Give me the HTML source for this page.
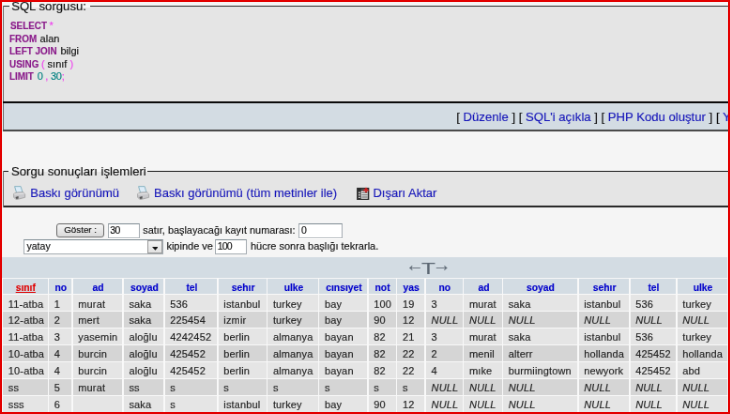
<!DOCTYPE html>
<html><head><meta charset="utf-8">
<style>
html,body{margin:0;padding:0;overflow:hidden;}
body{width:730px;height:414px;overflow:hidden;background:#f5f5f5;position:relative;font-family:"Liberation Sans",sans-serif;color:#000;}
#frame{position:absolute;left:0;top:0;width:726px;height:410px;border:2px solid #e30000;z-index:10;}
#w{position:absolute;left:0;top:0;width:800px;height:460px;transform:scale(0.9385);transform-origin:0 0;will-change:transform;}
#w div,#w span{white-space:nowrap;-webkit-text-stroke:0.15px;}
.a{position:absolute;}
.bg{position:absolute;}
.t13{position:absolute;font-size:13.14px;line-height:15px;color:#111;}
.t11{position:absolute;font-size:11px;line-height:13px;color:#111;}
a{color:#1818ba;text-decoration:none;}
.k{color:#8a1a8a;font-weight:bold;display:inline-block;transform:scaleX(0.90);transform-origin:0 50%;}
.p{color:#f040f0;}
.n{color:#008080;}
.inp{position:absolute;background:#fff;border:1px solid #a5acb2;border-top-color:#7f8c94;box-sizing:border-box;font-size:10.5px;line-height:13.5px;padding-left:2.5px;color:#111;}
.c{position:absolute;}
.ro .c{background:#e5e5e5;}
.re .c{background:#d5d5d5;}
.h .c{background:#d3dce3;}
.ct{position:absolute;font-size:11px;line-height:13px;color:#222;letter-spacing:0.14px;}
.th{position:absolute;font-size:11px;line-height:13px;color:#0000cc;font-weight:bold;text-align:center;}
.th span{display:inline-block;transform:scaleX(0.94);}
</style></head><body>
<div id="w">

<div class="bg" style="left:2.56px;top:6.39px;width:790px;height:102.72px;background:#e5e5e5;"></div>
<div class="bg" style="left:2.56px;top:6.34px;width:790px;height:1.07px;background:#303030;"></div>
<div class="bg" style="left:2.56px;top:6.39px;width:1.49px;height:133.19px;background:#6a6a6a;"></div>
<div class="bg" style="left:10.23px;top:5.54px;width:85.35px;height:2.34px;background:#f5f5f5;"></div>
<div class="t13" style="left:12.15px;top:-0.85px;">SQL sorgusu:</div>
<div class="t11" style="left:10.97px;top:21.36px;"><span class="k">SELECT</span></div>
<div class="t11 p" style="left:52.53px;top:21.36px;">*</div>
<div class="t11" style="left:10.02px;top:35.11px;"><span class="k">FROM</span></div>
<div class="t11" style="left:42.62px;top:35.11px;">alan</div>
<div class="t11" style="left:10.02px;top:48.43px;"><span class="k">LEFT JOIN</span></div>
<div class="t11" style="left:64.46px;top:48.43px;">bilgi</div>
<div class="t11" style="left:10.02px;top:61.64px;"><span class="k">USING</span></div>
<div class="t11" style="left:43.90px;top:61.64px;"><span class="p">(</span> sınıf <span class="p">)</span></div>
<div class="t11" style="left:10.02px;top:74.75px;"><span class="k">LIMIT</span></div>
<div class="t11" style="left:39.64px;top:74.75px;letter-spacing:-0.25px;"><span class="n">0</span> <span class="p">,</span> <span class="n">30</span><span class="p">;</span></div>
<div class="bg" style="left:4.05px;top:108.68px;width:790px;height:30.26px;background:#d3dce3;"></div>
<div class="bg" style="left:2.56px;top:108.26px;width:790px;height:1.65px;background:#0a0a0a;"></div>
<div class="bg" style="left:2.56px;top:138.41px;width:790px;height:1.17px;background:#4a4a4a;"></div>
<div class="t13" style="left:486.31px;top:116.89px;">[ <a>Düzenle</a> ] [ <a>SQL'i açıkla</a> ] [ <a>PHP Kodu oluştur</a> ] [ <a>Yenile</a> ]</div>
<div class="bg" style="left:2.56px;top:182.21px;width:790px;height:37.83px;background:#e5e5e5;"></div>
<div class="bg" style="left:2.56px;top:181.67px;width:790px;height:1.33px;background:#1a1a1a;"></div>
<div class="bg" style="left:2.56px;top:219.45px;width:790px;height:1.23px;background:#2a2a2a;"></div>
<div class="bg" style="left:2.56px;top:181.67px;width:1.49px;height:39.00px;background:#6a6a6a;"></div>
<div class="bg" style="left:9.38px;top:181.14px;width:147.58px;height:2.34px;background:#f5f5f5;"></div>
<div class="t13" style="left:12.04px;top:175.39px;">Sorgu sonuçları işlemleri</div>
<div class="t13" style="left:32.29px;top:198.19px;font-size:13px;"><a>Baskı görünümü</a></div>
<div class="t13" style="left:164.09px;top:198.19px;font-size:13px;"><a>Baskı görünümü (tüm metinler ile)</a></div>
<div class="t13" style="left:397.44px;top:198.19px;font-size:13px;"><a>Dışarı Aktar</a></div>
<svg class="a" style="left:14.49px;top:197.76px;" width="13.32" height="15.45" viewBox="0 0 12.5 14.5"><path d="M1.5 0.6L7.6 0.6L9.6 7.2L3.6 7.6Z" fill="#dcecf8" stroke="#79aabb" stroke-width="0.8"/><path d="M0.6 8L3.4 6.6L10 6.2L11.8 8.6L11.8 11.6L3 13.8L0.6 11.4Z" fill="#c9c9cc" stroke="#9a9a9a" stroke-width="0.7"/><path d="M2.2 11.2L5.2 10.4L5.4 12.6L3.2 13.2Z" fill="#555"/><path d="M1 8.4L11 7.6" stroke="#eee" stroke-width="0.8"/></svg>
<svg class="a" style="left:146.40px;top:197.76px;" width="13.32" height="15.45" viewBox="0 0 12.5 14.5"><path d="M1.5 0.6L7.6 0.6L9.6 7.2L3.6 7.6Z" fill="#dcecf8" stroke="#79aabb" stroke-width="0.8"/><path d="M0.6 8L3.4 6.6L10 6.2L11.8 8.6L11.8 11.6L3 13.8L0.6 11.4Z" fill="#c9c9cc" stroke="#9a9a9a" stroke-width="0.7"/><path d="M2.2 11.2L5.2 10.4L5.4 12.6L3.2 13.2Z" fill="#555"/><path d="M1 8.4L11 7.6" stroke="#eee" stroke-width="0.8"/></svg>
<svg class="a" style="left:380.18px;top:198.83px;" width="13.85" height="14.28" viewBox="0 0 13 13.4"><rect x="0.8" y="1.6" width="11" height="11" fill="#fff" stroke="#2a2a2a" stroke-width="1.4"/><rect x="0.8" y="1.6" width="3.6" height="11" fill="#333"/><path d="M0.8 3.2H11.8" stroke="#2a2a2a" stroke-width="1.8"/><path d="M5 5.8H11M5 8.2H11M5 10.4H11" stroke="#444" stroke-width="1"/><path d="M1.9 5.2h1.4v1.3h-1.4zM1.9 7.6h1.4v1.3h-1.4zM1.9 10h1.4v1.3h-1.4z" fill="#eee"/><path d="M6.2 4.2L9.4 0.4L12.6 4.2Z" fill="#cc1f1f"/><path d="M8.4 4.2h2v1.5h-2z" fill="#cc1f1f"/></svg>
<div class="a" style="left:59.99px;top:238.47px;width:51.36px;height:14.70px;box-sizing:border-box;border:1px solid #6a6a6a;border-radius:3px;background:linear-gradient(#f6f6f6,#dadada);font-size:9.8px;line-height:12.6px;text-align:center;color:#111;">Göster :</div>
<div class="inp" style="left:114.65px;top:237.93px;width:34.10px;height:16.30px;letter-spacing:-0.6px;padding-left:1.6px;">30</div>
<div class="t11" style="left:152.26px;top:239.16px;font-size:10.9px;">satır, başlayacağı kayıt numarası:</div>
<div class="inp" style="left:317.53px;top:237.93px;width:47.95px;height:16.30px;">0</div>
<div class="inp" style="left:25.04px;top:255.19px;width:149.39px;height:15.88px;line-height:12px;">yatay</div>
<div class="a" style="left:157.27px;top:256.37px;width:16.20px;height:13.53px;box-sizing:border-box;border:1px solid #9a9a9a;background:linear-gradient(#f4f4f4,#e2e2e2);"></div>
<svg class="a" style="left:161.53px;top:262.76px;" width="6.82" height="3.84" viewBox="0 0 7 4"><path d="M0 0H7L3.5 4Z" fill="#111"/></svg>
<div class="t11" style="left:177.41px;top:256.21px;">kipinde ve</div>
<div class="inp" style="left:228.66px;top:255.41px;width:34.63px;height:15.98px;letter-spacing:-0.8px;padding-left:2px;">100</div>
<div class="t11" style="left:266.92px;top:256.42px;">hücre sonra başlığı tekrarla.</div>
<div class="bg" style="left:2.13px;top:273.73px;width:772.94px;height:22.16px;background:#d3dce3;"></div>
<div class="a" style="left:432.18px;top:273.63px;font-size:19.4px;line-height:17px;color:#5b6672;">←</div>
<div class="a" style="left:448.80px;top:275.97px;font-size:17.4px;line-height:20px;color:#5b6672;transform:scaleX(1.4);transform-origin:0 0;">T</div>
<div class="a" style="left:460.95px;top:273.63px;font-size:19.4px;line-height:17px;color:#5b6672;">→</div>
<div class="bg" style="left:2.13px;top:295.68px;width:773.15px;height:200px;background:#f9f9f9;"></div>
<div class="h">
<div class="c" style="left:3.20px;top:296.54px;width:47.52px;height:16.30px;"></div>
<div class="th" style="left:3.73px;top:299.52px;width:47.52px;"><span><a style="color:#e00000;text-decoration:underline;">sınıf</a></span></div>
<div class="c" style="left:52.21px;top:296.54px;width:23.97px;height:16.30px;"></div>
<div class="th" style="left:52.74px;top:299.52px;width:23.97px;"><span>no</span></div>
<div class="c" style="left:77.68px;top:296.54px;width:52.64px;height:16.30px;"></div>
<div class="th" style="left:78.21px;top:299.52px;width:52.64px;"><span>ad</span></div>
<div class="c" style="left:131.81px;top:296.54px;width:42.41px;height:16.30px;"></div>
<div class="th" style="left:132.34px;top:299.52px;width:42.41px;"><span>soyad</span></div>
<div class="c" style="left:175.71px;top:296.54px;width:55.51px;height:16.30px;"></div>
<div class="th" style="left:176.24px;top:299.52px;width:55.51px;"><span>tel</span></div>
<div class="c" style="left:232.71px;top:296.54px;width:51.04px;height:16.30px;"></div>
<div class="th" style="left:233.24px;top:299.52px;width:51.04px;"><span>sehır</span></div>
<div class="c" style="left:285.24px;top:296.54px;width:53.60px;height:16.30px;"></div>
<div class="th" style="left:285.78px;top:299.52px;width:53.60px;"><span>ulke</span></div>
<div class="c" style="left:340.33px;top:296.54px;width:50.83px;height:16.30px;"></div>
<div class="th" style="left:340.86px;top:299.52px;width:50.83px;"><span>cınsıyet</span></div>
<div class="c" style="left:392.65px;top:296.54px;width:29.09px;height:16.30px;"></div>
<div class="th" style="left:393.18px;top:299.52px;width:29.09px;"><span>not</span></div>
<div class="c" style="left:423.23px;top:296.54px;width:29.20px;height:16.30px;"></div>
<div class="th" style="left:423.76px;top:299.52px;width:29.20px;"><span>yas</span></div>
<div class="c" style="left:453.92px;top:296.54px;width:38.89px;height:16.30px;"></div>
<div class="th" style="left:454.45px;top:299.52px;width:38.89px;"><span>no</span></div>
<div class="c" style="left:494.30px;top:296.54px;width:40.28px;height:16.30px;"></div>
<div class="th" style="left:494.83px;top:299.52px;width:40.28px;"><span>ad</span></div>
<div class="c" style="left:536.07px;top:296.54px;width:79.06px;height:16.30px;"></div>
<div class="th" style="left:536.60px;top:299.52px;width:79.06px;"><span>soyad</span></div>
<div class="c" style="left:616.62px;top:296.54px;width:53.38px;height:16.30px;"></div>
<div class="th" style="left:617.16px;top:299.52px;width:53.38px;"><span>sehır</span></div>
<div class="c" style="left:671.50px;top:296.54px;width:48.59px;height:16.30px;"></div>
<div class="th" style="left:672.03px;top:299.52px;width:48.59px;"><span>tel</span></div>
<div class="c" style="left:721.58px;top:296.54px;width:53.28px;height:16.30px;"></div>
<div class="th" style="left:722.11px;top:299.52px;width:53.28px;"><span>ulke</span></div>
</div>
<div class="ro">
<div class="c" style="left:3.20px;top:314.44px;width:47.52px;height:16.30px;"></div>
<div class="ct" style="left:8.84px;top:317.53px;">11-atba</div>
<div class="c" style="left:52.21px;top:314.44px;width:23.97px;height:16.30px;"></div>
<div class="ct" style="left:57.86px;top:317.53px;">1</div>
<div class="c" style="left:77.68px;top:314.44px;width:52.64px;height:16.30px;"></div>
<div class="ct" style="left:83.32px;top:317.53px;">murat</div>
<div class="c" style="left:131.81px;top:314.44px;width:42.41px;height:16.30px;"></div>
<div class="ct" style="left:137.45px;top:317.53px;">saka</div>
<div class="c" style="left:175.71px;top:314.44px;width:55.51px;height:16.30px;"></div>
<div class="ct" style="left:181.35px;top:317.53px;">536</div>
<div class="c" style="left:232.71px;top:314.44px;width:51.04px;height:16.30px;"></div>
<div class="ct" style="left:238.36px;top:317.53px;">istanbul</div>
<div class="c" style="left:285.24px;top:314.44px;width:53.60px;height:16.30px;"></div>
<div class="ct" style="left:290.89px;top:317.53px;">turkey</div>
<div class="c" style="left:340.33px;top:314.44px;width:50.83px;height:16.30px;"></div>
<div class="ct" style="left:345.98px;top:317.53px;">bay</div>
<div class="c" style="left:392.65px;top:314.44px;width:29.09px;height:16.30px;"></div>
<div class="ct" style="left:398.30px;top:317.53px;">100</div>
<div class="c" style="left:423.23px;top:314.44px;width:29.20px;height:16.30px;"></div>
<div class="ct" style="left:428.88px;top:317.53px;">19</div>
<div class="c" style="left:453.92px;top:314.44px;width:38.89px;height:16.30px;"></div>
<div class="ct" style="left:459.56px;top:317.53px;">3</div>
<div class="c" style="left:494.30px;top:314.44px;width:40.28px;height:16.30px;"></div>
<div class="ct" style="left:499.95px;top:317.53px;">murat</div>
<div class="c" style="left:536.07px;top:314.44px;width:79.06px;height:16.30px;"></div>
<div class="ct" style="left:541.72px;top:317.53px;">saka</div>
<div class="c" style="left:616.62px;top:314.44px;width:53.38px;height:16.30px;"></div>
<div class="ct" style="left:622.27px;top:317.53px;">istanbul</div>
<div class="c" style="left:671.50px;top:314.44px;width:48.59px;height:16.30px;"></div>
<div class="ct" style="left:677.14px;top:317.53px;">536</div>
<div class="c" style="left:721.58px;top:314.44px;width:53.28px;height:16.30px;"></div>
<div class="ct" style="left:727.22px;top:317.53px;">turkey</div>
</div>
<div class="re">
<div class="c" style="left:3.20px;top:332.45px;width:47.52px;height:16.30px;"></div>
<div class="ct" style="left:8.84px;top:335.45px;">12-atba</div>
<div class="c" style="left:52.21px;top:332.45px;width:23.97px;height:16.30px;"></div>
<div class="ct" style="left:57.86px;top:335.45px;">2</div>
<div class="c" style="left:77.68px;top:332.45px;width:52.64px;height:16.30px;"></div>
<div class="ct" style="left:83.32px;top:335.45px;">mert</div>
<div class="c" style="left:131.81px;top:332.45px;width:42.41px;height:16.30px;"></div>
<div class="ct" style="left:137.45px;top:335.45px;">saka</div>
<div class="c" style="left:175.71px;top:332.45px;width:55.51px;height:16.30px;"></div>
<div class="ct" style="left:181.35px;top:335.45px;">225454</div>
<div class="c" style="left:232.71px;top:332.45px;width:51.04px;height:16.30px;"></div>
<div class="ct" style="left:238.36px;top:335.45px;">izmir</div>
<div class="c" style="left:285.24px;top:332.45px;width:53.60px;height:16.30px;"></div>
<div class="ct" style="left:290.89px;top:335.45px;">turkey</div>
<div class="c" style="left:340.33px;top:332.45px;width:50.83px;height:16.30px;"></div>
<div class="ct" style="left:345.98px;top:335.45px;">bay</div>
<div class="c" style="left:392.65px;top:332.45px;width:29.09px;height:16.30px;"></div>
<div class="ct" style="left:398.30px;top:335.45px;">90</div>
<div class="c" style="left:423.23px;top:332.45px;width:29.20px;height:16.30px;"></div>
<div class="ct" style="left:428.88px;top:335.45px;">12</div>
<div class="c" style="left:453.92px;top:332.45px;width:38.89px;height:16.30px;"></div>
<div class="ct" style="left:459.56px;top:335.45px;"><i>NULL</i></div>
<div class="c" style="left:494.30px;top:332.45px;width:40.28px;height:16.30px;"></div>
<div class="ct" style="left:499.95px;top:335.45px;"><i>NULL</i></div>
<div class="c" style="left:536.07px;top:332.45px;width:79.06px;height:16.30px;"></div>
<div class="ct" style="left:541.72px;top:335.45px;"><i>NULL</i></div>
<div class="c" style="left:616.62px;top:332.45px;width:53.38px;height:16.30px;"></div>
<div class="ct" style="left:622.27px;top:335.45px;"><i>NULL</i></div>
<div class="c" style="left:671.50px;top:332.45px;width:48.59px;height:16.30px;"></div>
<div class="ct" style="left:677.14px;top:335.45px;"><i>NULL</i></div>
<div class="c" style="left:721.58px;top:332.45px;width:53.28px;height:16.30px;"></div>
<div class="ct" style="left:727.22px;top:335.45px;"><i>NULL</i></div>
</div>
<div class="ro">
<div class="c" style="left:3.20px;top:350.45px;width:47.52px;height:16.30px;"></div>
<div class="ct" style="left:8.84px;top:353.37px;">11-atba</div>
<div class="c" style="left:52.21px;top:350.45px;width:23.97px;height:16.30px;"></div>
<div class="ct" style="left:57.86px;top:353.37px;">3</div>
<div class="c" style="left:77.68px;top:350.45px;width:52.64px;height:16.30px;"></div>
<div class="ct" style="left:83.32px;top:353.37px;">yasemin</div>
<div class="c" style="left:131.81px;top:350.45px;width:42.41px;height:16.30px;"></div>
<div class="ct" style="left:137.45px;top:353.37px;">aloğlu</div>
<div class="c" style="left:175.71px;top:350.45px;width:55.51px;height:16.30px;"></div>
<div class="ct" style="left:181.35px;top:353.37px;">4242452</div>
<div class="c" style="left:232.71px;top:350.45px;width:51.04px;height:16.30px;"></div>
<div class="ct" style="left:238.36px;top:353.37px;">berlin</div>
<div class="c" style="left:285.24px;top:350.45px;width:53.60px;height:16.30px;"></div>
<div class="ct" style="left:290.89px;top:353.37px;">almanya</div>
<div class="c" style="left:340.33px;top:350.45px;width:50.83px;height:16.30px;"></div>
<div class="ct" style="left:345.98px;top:353.37px;">bayan</div>
<div class="c" style="left:392.65px;top:350.45px;width:29.09px;height:16.30px;"></div>
<div class="ct" style="left:398.30px;top:353.37px;">82</div>
<div class="c" style="left:423.23px;top:350.45px;width:29.20px;height:16.30px;"></div>
<div class="ct" style="left:428.88px;top:353.37px;">21</div>
<div class="c" style="left:453.92px;top:350.45px;width:38.89px;height:16.30px;"></div>
<div class="ct" style="left:459.56px;top:353.37px;">3</div>
<div class="c" style="left:494.30px;top:350.45px;width:40.28px;height:16.30px;"></div>
<div class="ct" style="left:499.95px;top:353.37px;">murat</div>
<div class="c" style="left:536.07px;top:350.45px;width:79.06px;height:16.30px;"></div>
<div class="ct" style="left:541.72px;top:353.37px;">saka</div>
<div class="c" style="left:616.62px;top:350.45px;width:53.38px;height:16.30px;"></div>
<div class="ct" style="left:622.27px;top:353.37px;">istanbul</div>
<div class="c" style="left:671.50px;top:350.45px;width:48.59px;height:16.30px;"></div>
<div class="ct" style="left:677.14px;top:353.37px;">536</div>
<div class="c" style="left:721.58px;top:350.45px;width:53.28px;height:16.30px;"></div>
<div class="ct" style="left:727.22px;top:353.37px;">turkey</div>
</div>
<div class="re">
<div class="c" style="left:3.20px;top:368.46px;width:47.52px;height:16.30px;"></div>
<div class="ct" style="left:8.84px;top:371.29px;">10-atba</div>
<div class="c" style="left:52.21px;top:368.46px;width:23.97px;height:16.30px;"></div>
<div class="ct" style="left:57.86px;top:371.29px;">4</div>
<div class="c" style="left:77.68px;top:368.46px;width:52.64px;height:16.30px;"></div>
<div class="ct" style="left:83.32px;top:371.29px;">burcin</div>
<div class="c" style="left:131.81px;top:368.46px;width:42.41px;height:16.30px;"></div>
<div class="ct" style="left:137.45px;top:371.29px;">aloğlu</div>
<div class="c" style="left:175.71px;top:368.46px;width:55.51px;height:16.30px;"></div>
<div class="ct" style="left:181.35px;top:371.29px;">425452</div>
<div class="c" style="left:232.71px;top:368.46px;width:51.04px;height:16.30px;"></div>
<div class="ct" style="left:238.36px;top:371.29px;">berlin</div>
<div class="c" style="left:285.24px;top:368.46px;width:53.60px;height:16.30px;"></div>
<div class="ct" style="left:290.89px;top:371.29px;">almanya</div>
<div class="c" style="left:340.33px;top:368.46px;width:50.83px;height:16.30px;"></div>
<div class="ct" style="left:345.98px;top:371.29px;">bayan</div>
<div class="c" style="left:392.65px;top:368.46px;width:29.09px;height:16.30px;"></div>
<div class="ct" style="left:398.30px;top:371.29px;">82</div>
<div class="c" style="left:423.23px;top:368.46px;width:29.20px;height:16.30px;"></div>
<div class="ct" style="left:428.88px;top:371.29px;">22</div>
<div class="c" style="left:453.92px;top:368.46px;width:38.89px;height:16.30px;"></div>
<div class="ct" style="left:459.56px;top:371.29px;">2</div>
<div class="c" style="left:494.30px;top:368.46px;width:40.28px;height:16.30px;"></div>
<div class="ct" style="left:499.95px;top:371.29px;">menil</div>
<div class="c" style="left:536.07px;top:368.46px;width:79.06px;height:16.30px;"></div>
<div class="ct" style="left:541.72px;top:371.29px;">alterr</div>
<div class="c" style="left:616.62px;top:368.46px;width:53.38px;height:16.30px;"></div>
<div class="ct" style="left:622.27px;top:371.29px;">hollanda</div>
<div class="c" style="left:671.50px;top:368.46px;width:48.59px;height:16.30px;"></div>
<div class="ct" style="left:677.14px;top:371.29px;">425452</div>
<div class="c" style="left:721.58px;top:368.46px;width:53.28px;height:16.30px;"></div>
<div class="ct" style="left:727.22px;top:371.29px;">hollanda</div>
</div>
<div class="ro">
<div class="c" style="left:3.20px;top:386.47px;width:47.52px;height:16.30px;"></div>
<div class="ct" style="left:8.84px;top:389.22px;">10-atba</div>
<div class="c" style="left:52.21px;top:386.47px;width:23.97px;height:16.30px;"></div>
<div class="ct" style="left:57.86px;top:389.22px;">4</div>
<div class="c" style="left:77.68px;top:386.47px;width:52.64px;height:16.30px;"></div>
<div class="ct" style="left:83.32px;top:389.22px;">burcin</div>
<div class="c" style="left:131.81px;top:386.47px;width:42.41px;height:16.30px;"></div>
<div class="ct" style="left:137.45px;top:389.22px;">aloğlu</div>
<div class="c" style="left:175.71px;top:386.47px;width:55.51px;height:16.30px;"></div>
<div class="ct" style="left:181.35px;top:389.22px;">425452</div>
<div class="c" style="left:232.71px;top:386.47px;width:51.04px;height:16.30px;"></div>
<div class="ct" style="left:238.36px;top:389.22px;">berlin</div>
<div class="c" style="left:285.24px;top:386.47px;width:53.60px;height:16.30px;"></div>
<div class="ct" style="left:290.89px;top:389.22px;">almanya</div>
<div class="c" style="left:340.33px;top:386.47px;width:50.83px;height:16.30px;"></div>
<div class="ct" style="left:345.98px;top:389.22px;">bayan</div>
<div class="c" style="left:392.65px;top:386.47px;width:29.09px;height:16.30px;"></div>
<div class="ct" style="left:398.30px;top:389.22px;">82</div>
<div class="c" style="left:423.23px;top:386.47px;width:29.20px;height:16.30px;"></div>
<div class="ct" style="left:428.88px;top:389.22px;">22</div>
<div class="c" style="left:453.92px;top:386.47px;width:38.89px;height:16.30px;"></div>
<div class="ct" style="left:459.56px;top:389.22px;">4</div>
<div class="c" style="left:494.30px;top:386.47px;width:40.28px;height:16.30px;"></div>
<div class="ct" style="left:499.95px;top:389.22px;">mıke</div>
<div class="c" style="left:536.07px;top:386.47px;width:79.06px;height:16.30px;"></div>
<div class="ct" style="left:541.72px;top:389.22px;">burmiingtown</div>
<div class="c" style="left:616.62px;top:386.47px;width:53.38px;height:16.30px;"></div>
<div class="ct" style="left:622.27px;top:389.22px;">newyork</div>
<div class="c" style="left:671.50px;top:386.47px;width:48.59px;height:16.30px;"></div>
<div class="ct" style="left:677.14px;top:389.22px;">425452</div>
<div class="c" style="left:721.58px;top:386.47px;width:53.28px;height:16.30px;"></div>
<div class="ct" style="left:727.22px;top:389.22px;">abd</div>
</div>
<div class="re">
<div class="c" style="left:3.20px;top:404.48px;width:47.52px;height:16.30px;"></div>
<div class="ct" style="left:8.84px;top:407.14px;">ss</div>
<div class="c" style="left:52.21px;top:404.48px;width:23.97px;height:16.30px;"></div>
<div class="ct" style="left:57.86px;top:407.14px;">5</div>
<div class="c" style="left:77.68px;top:404.48px;width:52.64px;height:16.30px;"></div>
<div class="ct" style="left:83.32px;top:407.14px;">murat</div>
<div class="c" style="left:131.81px;top:404.48px;width:42.41px;height:16.30px;"></div>
<div class="ct" style="left:137.45px;top:407.14px;">ss</div>
<div class="c" style="left:175.71px;top:404.48px;width:55.51px;height:16.30px;"></div>
<div class="ct" style="left:181.35px;top:407.14px;">s</div>
<div class="c" style="left:232.71px;top:404.48px;width:51.04px;height:16.30px;"></div>
<div class="ct" style="left:238.36px;top:407.14px;">s</div>
<div class="c" style="left:285.24px;top:404.48px;width:53.60px;height:16.30px;"></div>
<div class="ct" style="left:290.89px;top:407.14px;">s</div>
<div class="c" style="left:340.33px;top:404.48px;width:50.83px;height:16.30px;"></div>
<div class="ct" style="left:345.98px;top:407.14px;">s</div>
<div class="c" style="left:392.65px;top:404.48px;width:29.09px;height:16.30px;"></div>
<div class="ct" style="left:398.30px;top:407.14px;">s</div>
<div class="c" style="left:423.23px;top:404.48px;width:29.20px;height:16.30px;"></div>
<div class="ct" style="left:428.88px;top:407.14px;">s</div>
<div class="c" style="left:453.92px;top:404.48px;width:38.89px;height:16.30px;"></div>
<div class="ct" style="left:459.56px;top:407.14px;"><i>NULL</i></div>
<div class="c" style="left:494.30px;top:404.48px;width:40.28px;height:16.30px;"></div>
<div class="ct" style="left:499.95px;top:407.14px;"><i>NULL</i></div>
<div class="c" style="left:536.07px;top:404.48px;width:79.06px;height:16.30px;"></div>
<div class="ct" style="left:541.72px;top:407.14px;"><i>NULL</i></div>
<div class="c" style="left:616.62px;top:404.48px;width:53.38px;height:16.30px;"></div>
<div class="ct" style="left:622.27px;top:407.14px;"><i>NULL</i></div>
<div class="c" style="left:671.50px;top:404.48px;width:48.59px;height:16.30px;"></div>
<div class="ct" style="left:677.14px;top:407.14px;"><i>NULL</i></div>
<div class="c" style="left:721.58px;top:404.48px;width:53.28px;height:16.30px;"></div>
<div class="ct" style="left:727.22px;top:407.14px;"><i>NULL</i></div>
</div>
<div class="ro">
<div class="c" style="left:3.20px;top:422.48px;width:47.52px;height:16.30px;"></div>
<div class="ct" style="left:8.84px;top:425.06px;">sss</div>
<div class="c" style="left:52.21px;top:422.48px;width:23.97px;height:16.30px;"></div>
<div class="ct" style="left:57.86px;top:425.06px;">6</div>
<div class="c" style="left:77.68px;top:422.48px;width:52.64px;height:16.30px;"></div>
<div class="c" style="left:131.81px;top:422.48px;width:42.41px;height:16.30px;"></div>
<div class="ct" style="left:137.45px;top:425.06px;">saka</div>
<div class="c" style="left:175.71px;top:422.48px;width:55.51px;height:16.30px;"></div>
<div class="ct" style="left:181.35px;top:425.06px;">s</div>
<div class="c" style="left:232.71px;top:422.48px;width:51.04px;height:16.30px;"></div>
<div class="ct" style="left:238.36px;top:425.06px;">istanbul</div>
<div class="c" style="left:285.24px;top:422.48px;width:53.60px;height:16.30px;"></div>
<div class="ct" style="left:290.89px;top:425.06px;">turkey</div>
<div class="c" style="left:340.33px;top:422.48px;width:50.83px;height:16.30px;"></div>
<div class="ct" style="left:345.98px;top:425.06px;">bay</div>
<div class="c" style="left:392.65px;top:422.48px;width:29.09px;height:16.30px;"></div>
<div class="ct" style="left:398.30px;top:425.06px;">90</div>
<div class="c" style="left:423.23px;top:422.48px;width:29.20px;height:16.30px;"></div>
<div class="ct" style="left:428.88px;top:425.06px;">12</div>
<div class="c" style="left:453.92px;top:422.48px;width:38.89px;height:16.30px;"></div>
<div class="ct" style="left:459.56px;top:425.06px;"><i>NULL</i></div>
<div class="c" style="left:494.30px;top:422.48px;width:40.28px;height:16.30px;"></div>
<div class="ct" style="left:499.95px;top:425.06px;"><i>NULL</i></div>
<div class="c" style="left:536.07px;top:422.48px;width:79.06px;height:16.30px;"></div>
<div class="ct" style="left:541.72px;top:425.06px;"><i>NULL</i></div>
<div class="c" style="left:616.62px;top:422.48px;width:53.38px;height:16.30px;"></div>
<div class="ct" style="left:622.27px;top:425.06px;"><i>NULL</i></div>
<div class="c" style="left:671.50px;top:422.48px;width:48.59px;height:16.30px;"></div>
<div class="ct" style="left:677.14px;top:425.06px;"><i>NULL</i></div>
<div class="c" style="left:721.58px;top:422.48px;width:53.28px;height:16.30px;"></div>
<div class="ct" style="left:727.22px;top:425.06px;"><i>NULL</i></div>
</div>
</div>
<div id="frame"></div>
</body></html>
